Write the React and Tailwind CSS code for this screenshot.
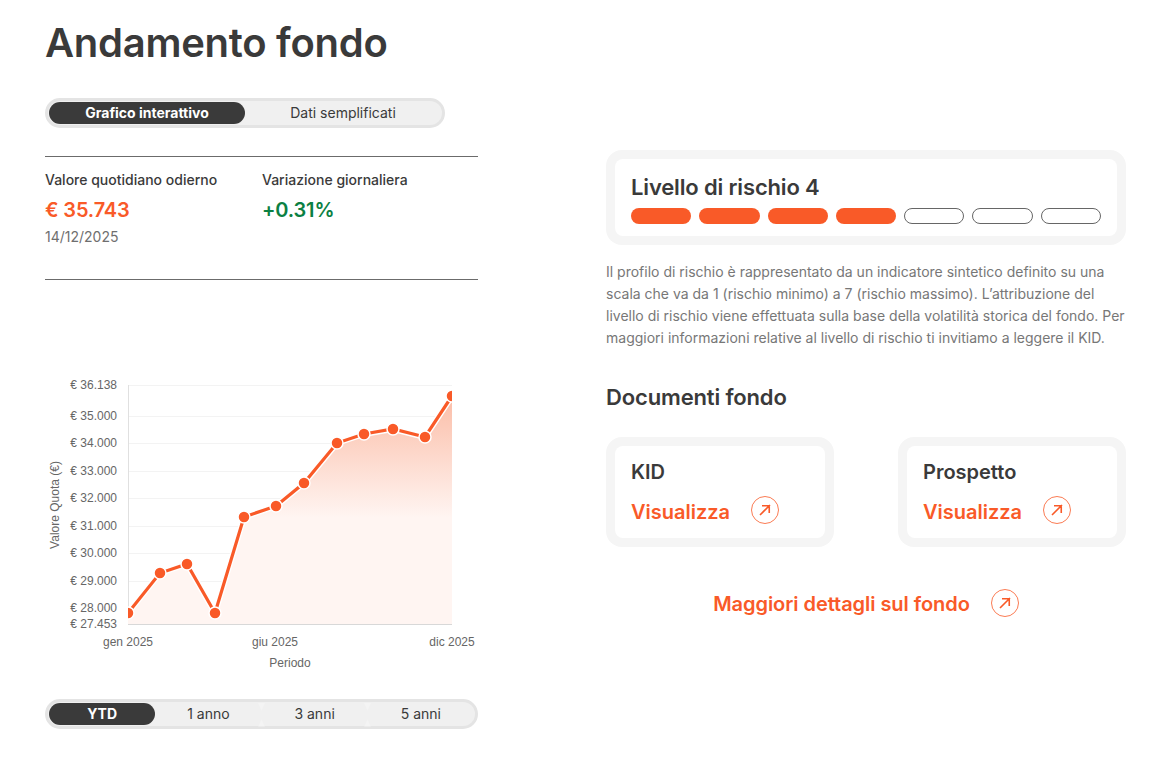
const ORANGE = "#f95a28";

const points = [
	[128, 613], [160, 573], [187, 564], [215, 613], [244, 517], [276, 506],
	[304, 483], [337, 443], [364, 434], [393, 429], [425, 437], [452, 396],
];

const ticks = [
	["€ 36.138", 385], ["€ 35.000", 416], ["€ 34.000", 443], ["€ 33.000", 471],
	["€ 32.000", 498], ["€ 31.000", 526], ["€ 30.000", 553], ["€ 29.000", 581],
	["€ 28.000", 608], ["€ 27.453", 624],
];

const ArrowCircle = () => (
	<svg width="28" height="28" viewBox="0 0 28 28" fill="none" className="shrink-0">
		<circle cx="14" cy="14" r="13.5" stroke={ORANGE} strokeOpacity="0.8" />
		<path d="M9 19 L19 9 M11 9.75 H18.25 V17" stroke={ORANGE} strokeWidth="1.6" />
	</svg>
);

// faint white marks the reference shows between the inactive tabs
const Notch = () => (
	<svg width="7" height="24" viewBox="0 0 7 24" className="absolute top-0 -right-[3.5px]">
		<path d="M0 0 H7 L3.5 8 Z M0 24 H7 L3.5 16 Z" fill="#fff" fillOpacity="0.25" />
	</svg>
);

const Segmented = ({ items, active, className, notches }) => (
	<div className={`flex h-[30px] rounded-full border-[3px] border-[#e4e4e4] bg-[#f0f0f0] p-px ${className}`}>
		{items.map((item, i) =>
			item === active ? (
				<div key={item} className="flex flex-1 items-center justify-center rounded-full bg-[#3a3a3a] text-sm font-bold text-white">
					{item}
				</div>
			) : (
				<div key={item} className="relative flex flex-1 items-center justify-center text-sm text-[#3a3a3a]">
					{item}
					{notches && i < items.length - 1 && <Notch />}
				</div>
			)
		)}
	</div>
);

const Chart = () => {
	const line = points.map((p) => p.join(",")).join(" ");
	const area = `128,624 ${line} 452,624`;
	return (
		<svg width="433" height="300" viewBox="45 375 433 300" className="mt-[95px] block" style={{ fontFamily: '"Liberation Sans", Arial, sans-serif' }}>
			<defs>
				<linearGradient id="areaFill" gradientUnits="userSpaceOnUse" x1="0" y1="396" x2="0" y2="518">
					<stop offset="0" stopColor="#fbbda7" />
					<stop offset="1" stopColor="#fff5f2" />
				</linearGradient>
				<clipPath id="plot">
					<rect x="128" y="380" width="324" height="244" />
				</clipPath>
			</defs>
			{ticks.map(([label, y]) => (
				<g key={label}>
					<line x1="128" x2="452" y1={y + 0.5} y2={y + 0.5} stroke="#f3f3f3" />
					<text x="117" y={y + 4} textAnchor="end" fontSize="12" fill="#666">{label}</text>
				</g>
			))}
			<line x1="128.5" x2="128.5" y1="385" y2="624" stroke="#e0e0e0" />
			<line x1="128" x2="452" y1="624.5" y2="624.5" stroke="#d8d8d8" />
			<g clipPath="url(#plot)">
				<polygon points={area} fill="url(#areaFill)" />
				<polyline points={line} fill="none" stroke="#fff" strokeWidth="6" />
				<polyline points={line} fill="none" stroke={ORANGE} strokeWidth="3.2" />
				{points.map(([x, y]) => (
					<circle key={x} cx={x} cy={y} r="6" fill={ORANGE} stroke="#fff" strokeWidth="1.5" />
				))}
			</g>
			<text x="128" y="646" textAnchor="middle" fontSize="12" fill="#666">gen 2025</text>
			<text x="275" y="646" textAnchor="middle" fontSize="12" fill="#666">giu 2025</text>
			<text x="452" y="646" textAnchor="middle" fontSize="12" fill="#666">dic 2025</text>
			<text x="290" y="667" textAnchor="middle" fontSize="12" fill="#666">Periodo</text>
			<text x="0" y="0" textAnchor="middle" fontSize="12" fill="#666" transform="translate(59 505) rotate(-90)">Valore Quota (€)</text>
		</svg>
	);
};

const DocCard = ({ title }) => (
	<div className="w-[228px] rounded-2xl bg-[#f5f5f5] p-[9px]">
		<div className="h-[92px] rounded-lg bg-white px-4 pt-[13px]">
			<div className="text-xl/[26px] font-semibold text-[#3a3a3a]">{title}</div>
			<div className="mt-[9px] flex items-center gap-[21px]">
				<span className="pt-1 text-xl/[28px] font-semibold text-[#f95a28]">Visualizza</span>
				<ArrowCircle />
			</div>
		</div>
	</div>
);

const App = () => {
	return (
		<div className="flex h-[769px] overflow-hidden bg-white pl-[45px] font-['Inter',sans-serif] text-[#3a3a3a]">
			<div className="w-[433px]">
				<h1 className="mt-[18px] text-[40px]/[50px] font-semibold tracking-[-0.27px] text-[#3a3a3a]">Andamento fondo</h1>
				<Segmented items={["Grafico interattivo", "Dati semplificati"]} active="Grafico interattivo" className="mt-[30px] w-[400px]" />
				<div className="mt-[28px] h-[124px] border-y border-[#6b6b6b] pt-[14px]">
					<div className="flex">
						<div className="w-[217px]">
							<div className="text-sm/[18px] font-medium">Valore quotidiano odierno</div>
							<div className="mt-[9px] text-xl/[24px] font-semibold tracking-[-0.15px] text-[#f95a28]">€ 35.743</div>
							<div className="mt-[6px] text-sm/[18px] text-[#6f6f6f]">14/12/2025</div>
						</div>
						<div>
							<div className="text-sm/[18px] font-medium">Variazione giornaliera</div>
							<div className="mt-[9px] text-xl/[24px] font-semibold tracking-[-0.15px] text-[#0b8043]">+0.31%</div>
						</div>
					</div>
				</div>
				<Chart />
				<Segmented items={["YTD", "1 anno", "3 anni", "5 anni"]} active="YTD" notches className="mt-[24px] w-full" />
			</div>
			<div className="ml-[128px] w-[520px] pt-[150px]">
				<div className="rounded-2xl bg-[#f5f5f5] p-[9px]">
					<div className="h-[77px] rounded-lg bg-white px-4 pt-[14px]">
						<div className="text-[22px]/[28px] font-semibold tracking-[-0.15px] text-[#3a3a3a]">Livello di rischio 4</div>
						<div className="mt-[7px] grid grid-cols-7 gap-2">
							{[1, 2, 3, 4, 5, 6, 7].map((n) => (
								<div
									key={n}
									className={n <= 4 ? "h-4 rounded-full bg-[#f95a28]" : "h-4 rounded-full border border-[#666] bg-white"}
								/>
							))}
						</div>
					</div>
				</div>
				<p className="mt-[16px] text-sm/[22px] text-[#777]">
					Il profilo di rischio è rappresentato da un indicatore sintetico definito su una scala che va da 1 (rischio minimo) a 7 (rischio massimo). L’attribuzione del livello di rischio viene effettuata sulla base della volatilità storica del fondo. Per maggiori informazioni relative al livello di rischio ti invitiamo a leggere il KID.
				</p>
				<h2 className="mt-[33px] text-[22px]/[30px] font-semibold tracking-[-0.15px] text-[#3a3a3a]">Documenti fondo</h2>
				<div className="mt-[25px] flex justify-between">
					<DocCard title="KID" />
					<DocCard title="Prospetto" />
				</div>
				<div className="mt-[41px] flex items-center justify-center gap-[21px]">
					<span className="pt-[2px] text-xl/[28px] font-semibold tracking-[-0.05px] text-[#f95a28]">Maggiori dettagli sul fondo</span>
					<ArrowCircle />
				</div>
			</div>
		</div>
	);
};

export default App;
